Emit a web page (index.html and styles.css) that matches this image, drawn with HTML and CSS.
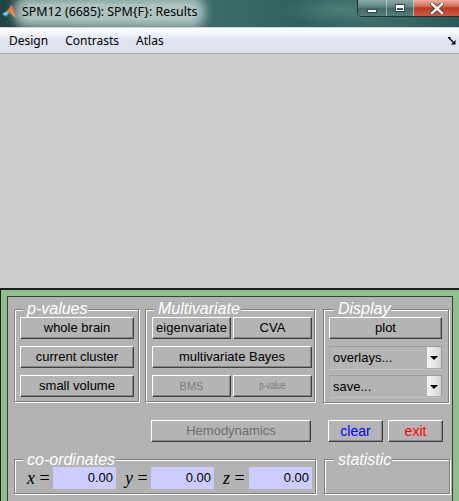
FILE: index.html
```html
<!DOCTYPE html>
<html>
<head>
<meta charset="utf-8">
<title>SPM12 Results</title>
<link rel="stylesheet" href="styles.css">
</head>
<body>
<div class="window">
  <div class="titlebar">
    <svg class="app-icon" viewBox="0 0 16 16" width="16" height="16">
      <polygon points="0,10 5,6.5 8,9 4,13" fill="#2f8fcf"/>
      <polygon points="1,10 5,7.5 6.5,9 3,11.5" fill="#7fd0f0"/>
      <polygon points="5,7 9.5,1 12,5 15.5,14 11,12 8,9" fill="#e8741a"/>
      <polygon points="9.5,1 12,5 15.5,14 12.5,11" fill="#b8300c"/>
    </svg>
    <span class="title">SPM12 (6685): SPM{F}: Results</span>
    <div class="caption">
      <div class="cbtn min"><span class="g-min"></span></div>
      <div class="cbtn max"><span class="g-max"></span></div>
      <div class="cbtn close">
        <svg viewBox="0 0 14 11" width="14" height="11">
          <path d="M2 1 L12 10 M12 1 L2 10" stroke="#3a4040" stroke-width="4" stroke-linecap="square"/>
          <path d="M2 1 L12 10 M12 1 L2 10" stroke="#ffffff" stroke-width="2.4" stroke-linecap="square"/>
        </svg>
      </div>
    </div>
  </div>
  <div class="menubar">
    <span class="menu-item">Design</span>
    <span class="menu-item">Contrasts</span>
    <span class="menu-item">Atlas</span>
    <svg class="dock" viewBox="0 0 8 8" width="8" height="8">
      <path d="M0 0.5 H2.5 M1 1 L5.5 5.5" stroke="#000" stroke-width="1.3" fill="none"/>
      <polygon points="7.5,3 7.5,7.5 3,7.5" fill="#000"/>
    </svg>
  </div>
  <div class="canvas"></div>
  <div class="green">
    <div class="panel">
      <div class="row1">
        <fieldset class="frame f-pvalues">
          <legend>p-values</legend>
          <div class="col">
            <div class="btn">whole brain</div>
            <div class="btn">current cluster</div>
            <div class="btn">small volume</div>
          </div>
        </fieldset>
        <fieldset class="frame f-multi">
          <legend>Multivariate</legend>
          <div class="grid2">
            <div class="btn">eigenvariate</div>
            <div class="btn">CVA</div>
            <div class="btn span2">multivariate Bayes</div>
            <div class="btn disabled">BMS</div>
            <div class="btn disabled small"><span>p-value</span></div>
          </div>
        </fieldset>
        <fieldset class="frame f-display">
          <legend>Display</legend>
          <div class="col-display">
            <div class="btn plot">plot</div>
            <div class="popup p1"><span class="popup-text">overlays...</span><span class="popup-arrow"><i></i></span></div>
            <div class="popup p2"><span class="popup-text">save...</span><span class="popup-arrow"><i></i></span></div>
          </div>
        </fieldset>
      </div>
      <div class="row2">
        <div class="btn hemo">Hemodynamics</div>
        <div class="btn clear">clear</div>
        <div class="btn exit">exit</div>
      </div>
      <div class="row3">
        <fieldset class="frame f-coords">
          <legend>co-ordinates</legend>
          <div class="coords">
            <div class="coord"><span class="lab"><i>x</i> =</span><span class="field">0.00</span></div>
            <div class="coord"><span class="lab"><i>y</i> =</span><span class="field">0.00</span></div>
            <div class="coord"><span class="lab"><i>z</i> =</span><span class="field">0.00</span></div>
          </div>
        </fieldset>
        <fieldset class="frame f-stat">
          <legend>statistic</legend>
        </fieldset>
      </div>
    </div>
  </div>
</div>
</body>
</html>
```
FILE: styles.css
```css
* { box-sizing: border-box; }
html, body { margin: 0; padding: 0; }
body {
  width: 459px;
  height: 501px;
  overflow: hidden;
  font-family: "Liberation Sans", Arial, sans-serif;
  background: #b3b3b3;
}
.window {
  width: 459px;
  height: 501px;
  display: flex;
  flex-direction: column;
  overflow: hidden;
}

/* ---------- title bar ---------- */
.titlebar {
  height: 27px;
  flex: none;
  display: flex;
  align-items: flex-start;
  background:
    radial-gradient(ellipse 60px 14px at 340px 10px, rgba(120,170,160,0.35), rgba(120,170,160,0)),
    linear-gradient(90deg, #1e4442 0%, #2e5e5b 20%, #3b6c68 45%, #2f625e 65%, #3c6e68 82%, #2a5a56 100%);
}
.app-icon {
  flex: none;
  margin: 4px 0 0 2px;
}
.title {
  margin: 4px 0 0 4px;
  font-family: "Noto Sans", sans-serif;
  font-size: 12.4px;
  line-height: 16px;
  color: #000;
  background: rgba(196, 212, 210, 0.85);
  box-shadow: 0 0 10px 8px rgba(196, 212, 210, 0.8);
  border-radius: 6px;
  white-space: nowrap;
}
.caption {
  margin-left: auto;
  display: flex;
  height: 17px;
  border: 1px solid rgba(25, 45, 45, 0.9);
  border-top: none;
  border-right: none;
  border-radius: 0 0 0 5px;
  overflow: hidden;
  box-shadow: inset 1px 0 0 rgba(255,255,255,0.5), inset 0 -1px 0 rgba(255,255,255,0.5);
}
.cbtn {
  display: flex;
  align-items: center;
  justify-content: center;
  height: 100%;
  border-right: 1px solid rgba(255, 255, 255, 0.45);
  background: linear-gradient(#8aa8a6, #5d8481 45%, #3f6a66 50%, #557d78);
}
.cbtn.min { width: 29px; }
.cbtn.max { width: 27px; }
.cbtn.close {
  width: 45px;
  border-right: none;
  background: linear-gradient(#eab0a0, #d46a54 40%, #bb3a22 50%, #cc5a3e);
}
.g-min {
  display: block;
  width: 10px;
  height: 4px;
  margin-top: 6px;
  background: #fff;
  border: 1px solid #3a4848;
}
.g-max {
  display: block;
  width: 10px;
  height: 8px;
  background: transparent;
  border: 1px solid #3a4848;
  box-shadow: inset 0 0 0 1px #fff, inset 0 2px 0 1px #fff, inset 0 0 0 2px #3a4848;
}

/* ---------- menu bar ---------- */
.menubar {
  height: 27px;
  flex: none;
  display: flex;
  align-items: center;
  gap: 17px;
  padding-left: 9px;
  padding-bottom: 1px;
  border-top: 1px solid #cfd2da;
  border-bottom: 1px solid #a3a6ad;
  background: linear-gradient(#fdfdfe 0%, #f4f5fa 22%, #e0e4f1 45%, #dde1ef 100%);
  font-family: "Noto Sans", sans-serif;
  font-size: 12px;
  color: #000;
}
.dock {
  margin-left: auto;
  margin-right: 3px;
  margin-top: 1px;
}

/* ---------- canvas ---------- */
.canvas {
  height: 234px;
  flex: none;
  background: #cccccc;
}

/* ---------- lower panel ---------- */
.green {
  flex: 1;
  background: #8fbf8f;
  border-top: 2px solid #1e1e1e;
  border-left: 1px solid #1e1e1e;
  padding: 6px 6px 0 6px;
  display: flex;
}
.panel {
  flex: 1;
  background: #b3b3b3;
  border: 1px solid #3c3c3c;
  border-bottom: none;
  padding: 4px 0 0 6px;
  display: flex;
  flex-direction: column;
  height: 230px;
}
.row1 {
  display: flex;
  align-items: flex-start;
}
.frame {
  margin: 0;
  padding: 0;
  min-width: 0;
  border: 1px solid #808080;
  box-shadow: 1px 1px 0 #ffffff, inset 1px 1px 0 #ffffff;
}
.frame legend {
  margin-left: 8px;
  padding: 0 1px 0 4px;
  font-family: "Liberation Sans", Arial, sans-serif;
  font-style: italic;
  font-size: 16px;
  line-height: 16px;
  color: #ffffff;
  background: #b3b3b3;
}
.f-pvalues { width: 125px; }
.f-multi { width: 170px; margin-left: 6px; }
.f-display { width: 126px; margin-left: 8px; }
.f-display legend { margin-left: 10px; }

.col {
  display: flex;
  flex-direction: column;
  gap: 7px;
  padding: 0 4px 4px 5px;
}
.grid2 {
  display: grid;
  grid-template-columns: 1fr 1fr;
  column-gap: 2px;
  row-gap: 7px;
  padding: 0 2px 4px 6px;
}
.span2 { grid-column: 1 / span 2; }

.btn {
  height: 22px;
  display: flex;
  align-items: center;
  justify-content: center;
  background: #b4b4b4;
  border: 1px solid;
  border-color: #ffffff #404040 #404040 #ffffff;
  box-shadow: inset -1px -1px 0 #858585;
  font-size: 13px;
  color: #000;
  white-space: nowrap;
  padding-bottom: 1px;
}
.btn.disabled { color: #7d7d7d; font-size: 11px; }
.btn.small span {
  display: inline-block;
  font-size: 10px;
  transform: scaleX(0.8);
}

.col-display {
  display: flex;
  flex-direction: column;
  padding: 0 6px 4px 5px;
}
.btn.plot { margin-bottom: 7px; }
.popup {
  display: flex;
  align-items: stretch;
  background: #b4b4b4;
  border-top: 1px solid #9c9c9c;
  border-left: 1px solid #a6a6a6;
  border-bottom: 1px solid #c4c4c4;
  font-size: 13px;
  color: #000;
}
.popup.p1 { height: 24px; margin-bottom: 5px; }
.popup.p2 { height: 23px; }
.popup-text {
  flex: 1;
  display: flex;
  align-items: center;
  padding-left: 3px;
  padding-bottom: 1px;
}
.popup-arrow {
  width: 15px;
  display: flex;
  align-items: center;
  justify-content: center;
  background: linear-gradient(90deg, #f2f2f2, #e2e2e2 70%, #d2d2d2);
  border-right: 1px solid #9a9a9a;
  border-bottom: 1px solid #a8a8a8;
}
.popup-arrow i {
  display: block;
  width: 0;
  height: 0;
  border-left: 4px solid transparent;
  border-right: 4px solid transparent;
  border-top: 4px solid #000;
  margin-top: 1px;
}

.row2 {
  display: flex;
  margin-top: 17px;
  padding-left: 137px;
}
.btn.hemo { width: 160px; color: #6e6e6e; }
.btn.clear { width: 55px; margin-left: 17px; color: #0000ff; font-size: 14px; }
.btn.exit { width: 55px; margin-left: 5px; color: #ff0000; font-size: 14px; }

.row3 {
  display: flex;
  align-items: stretch;
  margin-top: 10px;
}
.row3 .frame legend { line-height: 15px; }
.f-coords { width: 302px; }
.f-stat { width: 126px; margin-left: 8px; }
.f-stat legend { margin-left: 9px; }
.coords {
  display: flex;
  gap: 9px;
  padding: 0 4px 4px 12px;
}
.coord {
  display: flex;
  align-items: center;
}
.lab {
  width: 26px;
  font-family: "Liberation Serif", "Times New Roman", serif;
  font-size: 18px;
  color: #000;
  white-space: nowrap;
}
.field {
  width: 63px;
  height: 22px;
  line-height: 22px;
  background: #ccccff;
  text-align: right;
  padding-right: 3px;
  font-size: 13px;
  color: #000;
}
```
